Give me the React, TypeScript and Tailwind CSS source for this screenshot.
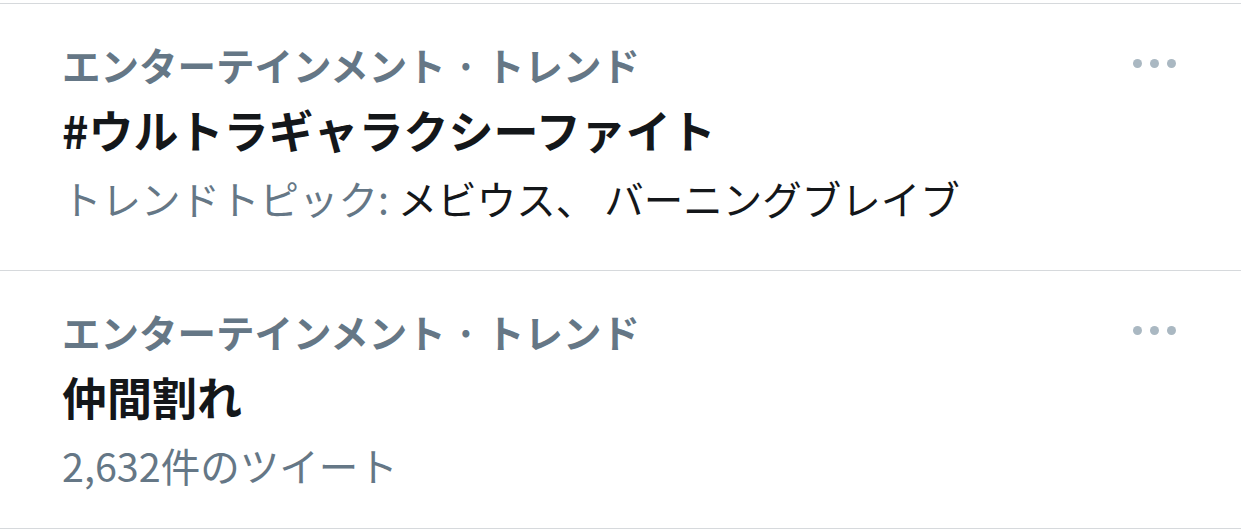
interface Trend {
  category: string
  title: string
  meta: React.ReactNode
  height: string
}

const trends: Trend[] = [
  {
    category: 'エンターテインメント · トレンド',
    title: '#ウルトラギャラクシーファイト',
    meta: (
      <>
        <span className="text-[#657786]">トレンドトピック:</span>
        <span className="text-[#14171a]"> メビウス、 バーニングブレイブ</span>
      </>
    ),
    height: 'h-[267px]',
  },
  {
    category: 'エンターテインメント · トレンド',
    title: '仲間割れ',
    meta: <span className="text-[#657786]">2,632件のツイート</span>,
    height: 'h-[258px]',
  },
]

function Dots() {
  return (
    <div className="flex gap-[8px] pt-[20px]">
      <span className="block w-[9px] h-[9px] rounded-full bg-[#aab8c2]" />
      <span className="block w-[9px] h-[9px] rounded-full bg-[#aab8c2]" />
      <span className="block w-[9px] h-[9px] rounded-full bg-[#aab8c2]" />
    </div>
  )
}

function TrendRow({ trend }: { trend: Trend }) {
  return (
    <div className={`flex justify-between border-b border-[#d6d9dc] pl-[62px] pr-[65px] pt-[35px] ${trend.height}`}>
      <div className="flex flex-col">
        <div className="text-[38.5px] leading-[50px] font-bold text-[#657786]">{trend.category}</div>
        <div className="mt-[8px] text-[45px] leading-[66px] font-bold text-[#14171a]">{trend.title}</div>
        <div className="mt-[2px] text-[39.5px] leading-[66px]">{trend.meta}</div>
      </div>
      <Dots />
    </div>
  )
}

export default function App() {
  return (
    <div
      className="w-[1241px] h-[530px] bg-white overflow-hidden pt-[3px]"
      style={{ fontFamily: '"Noto Sans CJK JP", "Noto Sans", sans-serif' }}
    >
      <div className="border-t border-[#d6d9dc]">
        {trends.map((t, i) => (
          <TrendRow key={i} trend={t} />
        ))}
      </div>
    </div>
  )
}
